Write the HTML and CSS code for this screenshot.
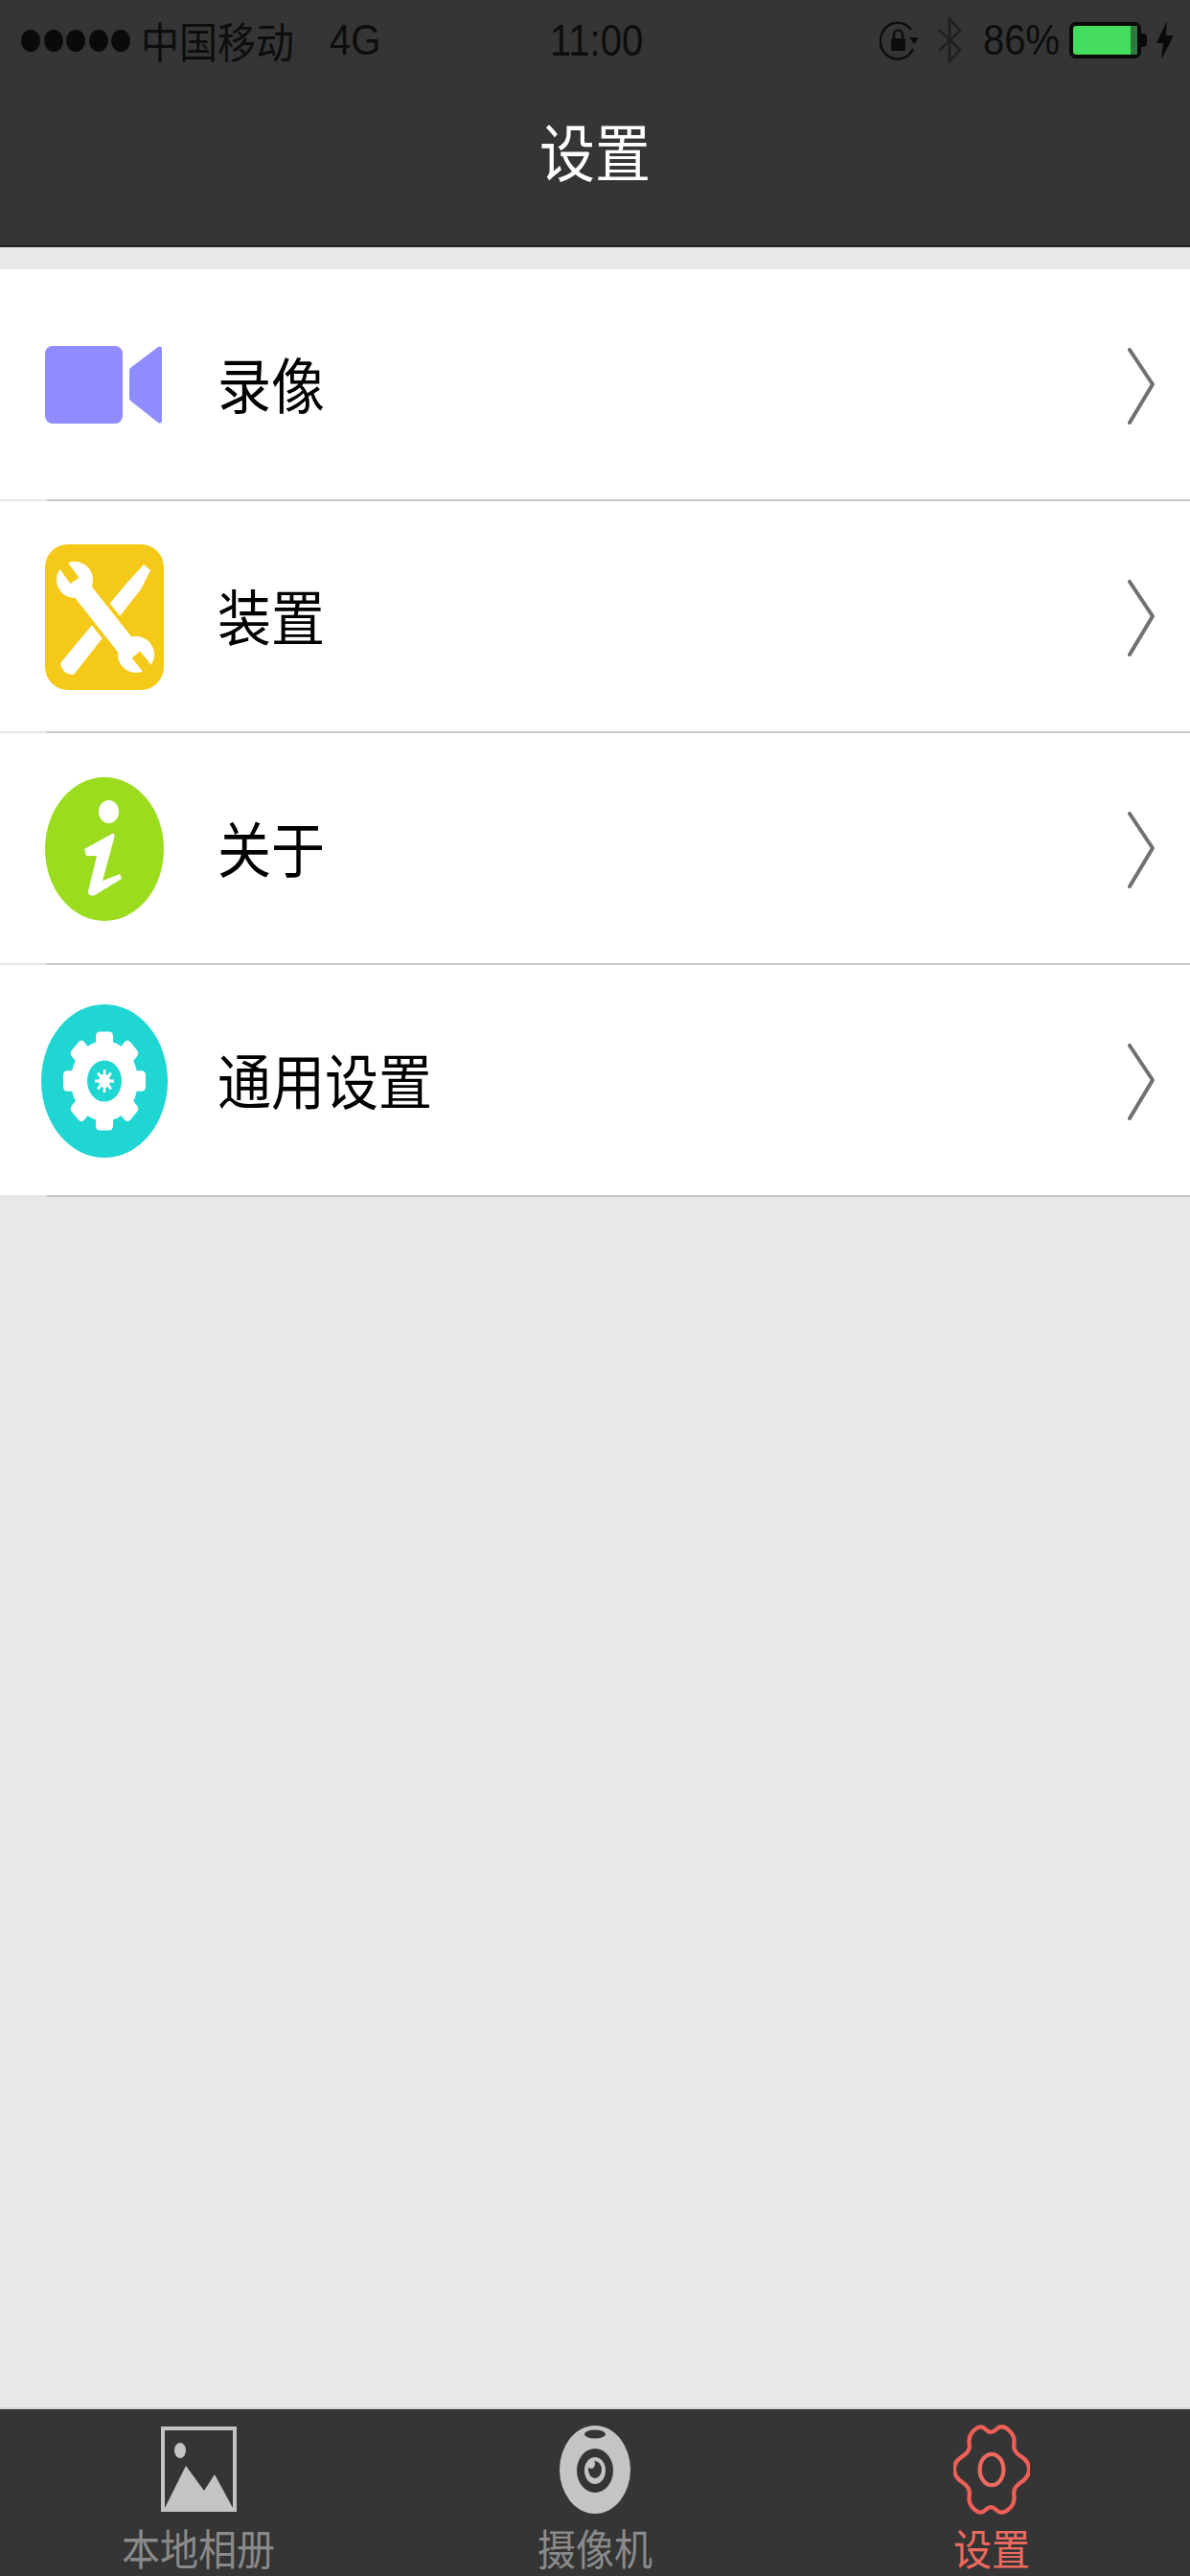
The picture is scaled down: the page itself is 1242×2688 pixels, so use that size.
FILE: index.html
```html
<!DOCTYPE html>
<html lang="zh-CN">
<head>
  <meta charset="UTF-8">
  <meta name="viewport" content="width=device-width, initial-scale=1.0">
  <title>设置</title>
  <link rel="stylesheet" href="styles.css">
</head>
<body>
  <div class="app">
    <header class="header">
      <div class="status-bar">
        <div class="status-left">
          <div class="signal">
            <span class="dot"></span><span class="dot"></span><span class="dot"></span><span class="dot"></span><span class="dot"></span>
          </div>
          <span class="carrier">中国移动</span>
          <span class="net">4G</span>
        </div>
        <span class="time">11:00</span>
        <div class="status-right">
          <svg class="ic-lock" width="42" height="42" viewBox="0 0 42 42">
            <path d="M33 10A18 19 0 1 0 35 30" fill="none" stroke="#0d0d0d" stroke-width="2.5"/>
            <path d="M31 18h10l-5 7z" fill="#0d0d0d"/>
            <rect x="12" y="19" width="15" height="13" rx="1.5" fill="#0d0d0d"/>
            <path d="M15 19v-4a4.500 4.500 0 0 1 9 0v4" fill="none" stroke="#0d0d0d" stroke-width="2.5"/>
          </svg>
          <svg class="ic-bt" width="26" height="50" viewBox="0 0 26 50">
            <path d="M2 14L24 35L13 47V3L24 15L2 36" fill="none" stroke="#1f1f1f" stroke-width="2.500"/>
          </svg>
          <span class="battery-pct">86%</span>
          <svg class="ic-battery" width="81" height="38" viewBox="0 0 81 38">
            <rect x="2" y="2" width="71" height="34" rx="5" fill="#43dc5c" stroke="#0a0a0a" stroke-width="4"/>
            <rect x="64" y="4" width="7" height="30" fill="#2f7a3f"/>
            <path d="M75 12h2a4 4 0 0 1 4 4v6a4 4 0 0 1-4 4h-2z" fill="#0a0a0a"/>
          </svg>
          <svg class="ic-bolt" width="18" height="40" viewBox="0 0 18 40">
            <path d="M11 0L0 23h7L5 40L18 15h-8z" fill="#0a0a0a"/>
          </svg>
        </div>
      </div>
      <h1 class="title">设置</h1>
    </header>

    <main class="main">
      <ul class="menu">
        <li class="menu-row">
          <div class="menu-icon">
            <svg width="124" height="82" viewBox="0 0 124 82">
              <rect x="0" y="0" width="81" height="81" rx="8" fill="#8f8cff"/>
              <path d="M89 23L118 1q4-2 4 3v73q0 5-4 3L89 57q-1-1-1-3V26q0-2 1-3z" fill="#8f8cff"/>
            </svg>
          </div>
          <span class="menu-label">录像</span>
          <svg class="chevron" width="28" height="80" viewBox="0 0 28 80">
            <path d="M2 2L26 38L2 78" fill="none" stroke="#707070" stroke-width="4" stroke-linecap="round" stroke-linejoin="round"/>
          </svg>
        </li>
        <li class="menu-row">
          <div class="menu-icon">
            <svg width="124" height="152" viewBox="0 0 124 152">
              <rect width="124" height="152" rx="24" fill="#f5c918"/>
              <path d="M16 124L84 42L103 21L110 27L100 47L30 136Q18 136 16 124z" fill="#fff"/>
              <path d="M33 41L93 117" stroke="#f5c918" stroke-width="29"/>
              <path d="M33 41L93 117" stroke="#fff" stroke-width="21"/>
              <circle cx="31" cy="37" r="19" fill="#fff"/>
              <circle cx="95" cy="115" r="19" fill="#fff"/>
              <path d="M17 19L31 38" stroke="#f5c918" stroke-width="11"/>
              <path d="M110 134L95 115" stroke="#f5c918" stroke-width="11"/>
            </svg>
          </div>
          <span class="menu-label">装置</span>
          <svg class="chevron" width="28" height="80" viewBox="0 0 28 80">
            <path d="M2 2L26 38L2 78" fill="none" stroke="#707070" stroke-width="4" stroke-linecap="round" stroke-linejoin="round"/>
          </svg>
        </li>
        <li class="menu-row">
          <div class="menu-icon">
            <svg width="124" height="150" viewBox="0 0 124 150">
              <ellipse cx="62" cy="75" rx="62" ry="75" fill="#9bdc1e"/>
              <ellipse cx="66.500" cy="36" rx="10.500" ry="12" fill="#fff"/>
              <path d="M41 75L70 59q3-1 2.500 3L60 108L78 101L80 106L52 123q-7 2-7-4L54 82L43 82z" fill="#fff"/>
            </svg>
          </div>
          <span class="menu-label">关于</span>
          <svg class="chevron" width="28" height="80" viewBox="0 0 28 80">
            <path d="M2 2L26 38L2 78" fill="none" stroke="#707070" stroke-width="4" stroke-linecap="round" stroke-linejoin="round"/>
          </svg>
        </li>
        <li class="menu-row">
          <div class="menu-icon">
            <svg width="132" height="160" viewBox="0 0 132 160">
              <ellipse cx="66" cy="80" rx="66" ry="80" fill="#1fd6d2"/>
              <g transform="translate(66 80) scale(1 1.2)" fill="#fff">
                <circle r="35"/>
                <rect x="-9" y="-43" width="18" height="20" rx="4"/>
                <rect x="-9" y="-43" width="18" height="20" rx="4" transform="rotate(45)"/>
                <rect x="-9" y="-43" width="18" height="20" rx="4" transform="rotate(90)"/>
                <rect x="-9" y="-43" width="18" height="20" rx="4" transform="rotate(135)"/>
                <rect x="-9" y="-43" width="18" height="20" rx="4" transform="rotate(180)"/>
                <rect x="-9" y="-43" width="18" height="20" rx="4" transform="rotate(225)"/>
                <rect x="-9" y="-43" width="18" height="20" rx="4" transform="rotate(270)"/>
                <rect x="-9" y="-43" width="18" height="20" rx="4" transform="rotate(315)"/>
                <circle r="18" fill="#1fd6d2"/>
                <circle r="6"/>
                <path d="M-10 0H10M0 -10V10M-7 -7L7 7M7 -7L-7 7" stroke="#fff" stroke-width="2.500"/>
              </g>
            </svg>
          </div>
          <span class="menu-label">通用设置</span>
          <svg class="chevron" width="28" height="80" viewBox="0 0 28 80">
            <path d="M2 2L26 38L2 78" fill="none" stroke="#707070" stroke-width="4" stroke-linecap="round" stroke-linejoin="round"/>
          </svg>
        </li>
      </ul>
    </main>

    <nav class="tabbar">
      <div class="tab">
        <svg class="tab-icon" width="80" height="90" viewBox="0 0 80 90">
          <rect x="3" y="2" width="75" height="85" fill="none" stroke="#c4c4c4" stroke-width="4"/>
          <ellipse cx="21" cy="25" rx="6" ry="8" fill="#c4c4c4"/>
          <path d="M5 85L27 41L46 67L57 50L76 85z" fill="#c4c4c4"/>
        </svg>
        <span class="tab-label">本地相册</span>
      </div>
      <div class="tab">
        <svg class="tab-icon" width="74" height="92" viewBox="0 0 74 92">
          <ellipse cx="37" cy="46" rx="37" ry="46" fill="#c4c4c4"/>
          <ellipse cx="37" cy="9" rx="11" ry="4.500" fill="#353535"/>
          <ellipse cx="37" cy="47" rx="19" ry="23" fill="#353535"/>
          <ellipse cx="37" cy="47" rx="11" ry="14" fill="#c4c4c4"/>
          <ellipse cx="37" cy="46" rx="7" ry="9" fill="#353535"/>
          <ellipse cx="33" cy="40" rx="4" ry="5" fill="#c4c4c4"/>
        </svg>
        <span class="tab-label">摄像机</span>
      </div>
      <div class="tab tab-active">
        <svg class="tab-icon" width="80" height="96" viewBox="-3 -3 84 100">
          <path d="M32.500 3Q38 9 44 3Q50 -3 57.500 3.500Q65 10 63.500 18.500Q62 27 71 32.500Q80 38 80 46.500Q80 55 71 61Q62 67 63.500 75.500Q65 84 57.500 90.500Q50 97 44 91Q38 85 32.500 91Q27 97 20 90.500Q13 84 14.500 75.500Q16 67 7 61Q-2 55 -2 46.500Q-2 38 7 32.500Q16 27 14.500 18.500Q13 10 20 3.500Q27 -3 32.500 3Z" fill="none" stroke="#ee5f57" stroke-width="4.500"/>
          <ellipse cx="39" cy="47" rx="13" ry="17" fill="none" stroke="#ee6a5f" stroke-width="4.500"/>
        </svg>
        <span class="tab-label">设置</span>
      </div>
    </nav>
  </div>
</body>
</html>
```

FILE: styles.css
```css
/* settings screen */
* {
  box-sizing: border-box;
}
body {
  margin: 0;
  font-family: "Liberation Sans", "Noto Sans CJK SC", sans-serif;
}
.app {
  width: 1242px;
  height: 2688px;
  display: flex;
  flex-direction: column;
  overflow: hidden;
  background-color: #e8e8e8;
}

/* header */
.header {
  height: 258px;
  background-color: #353535;
  border-bottom: 2px solid #262626;
}
.status-bar {
  height: 84px;
  padding: 0 17px 0 22px;
  display: grid;
  grid-template-columns: 552px auto 1fr;
  align-items: center;
  font-size: 40px;
  color: #0d0d0d;
}
.status-left {
  display: flex;
  align-items: center;
}
.signal {
  display: flex;
  gap: 3.500px;
  margin-right: 11px;
}
.dot {
  width: 20px;
  height: 23px;
  border-radius: 50%;
  background-color: #0a0a0a;
}
.carrier {
  transform: scaleY(1.1);
}
.net {
  margin-left: 37px;
  transform: scaleY(1.1);
}
.time {
  transform: scaleY(1.15);
}
.status-right {
  display: flex;
  align-items: center;
  justify-content: flex-end;
}
.ic-bt {
  margin-left: 18px;
}
.battery-pct {
  margin-left: 22px;
  transform: scaleY(1.1);
}
.ic-battery {
  margin-left: 10px;
}
.ic-bolt {
  margin-left: 10px;
}
.title {
  margin: 0;
  height: 156px;
  line-height: 156px;
  text-align: center;
  font-size: 58px;
  font-weight: 400;
  color: #fff;
  transform: scaleY(1.12);
}

/* list */
.main {
  flex: 1;
  padding-top: 23px;
}
.menu {
  margin: 0;
  padding: 0;
  list-style: none;
  background-color: #fff;
}
.menu-row {
  height: 242px;
  display: flex;
  align-items: center;
  padding-right: 37px;
  border-bottom: 2px solid #c8c8c8;
  border-image: linear-gradient(to right, #e4e4e4 50px, #c8c8c8 50px) 1;
}
.menu-icon {
  width: 218px;
  padding-top: 2px;
  display: flex;
  justify-content: center;
  align-items: center;
}
.menu-label {
  margin-left: 9px;
  margin-bottom: 6px;
  flex: 1;
  font-size: 56px;
  color: #000;
  transform: scaleY(1.12);
  transform-origin: left center;
}
.chevron {
  margin-top: 4px;
}

/* bottom tabs */
.tabbar {
  height: 176px;
  display: grid;
  grid-template-columns: repeat(3, 1fr);
  background-color: #353535;
  border-top: 2px solid #d4d4d4;
}
.tab {
  display: flex;
  flex-direction: column;
  align-items: center;
  color: #8a8a8a;
}
.tab-icon {
  display: block;
  height: 100px;
  margin-top: 13px;
}
.tab-label {
  margin-top: 11px;
  font-size: 40px;
  line-height: 46px;
  transform: scaleY(1.12);
}
.tab-active {
  color: #ee6a5f;
}
```
